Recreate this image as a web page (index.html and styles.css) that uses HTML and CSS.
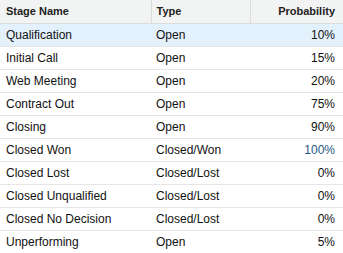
FILE: index.html
```html
<!DOCTYPE html>
<html>
<head>
<meta charset="utf-8">
<link rel="stylesheet" href="styles.css">
</head>
<body>
<table class="grid">
  <colgroup>
    <col class="w1">
    <col class="w2">
    <col class="w3">
  </colgroup>
  <thead>
    <tr>
      <th>Stage Name</th>
      <th>Type</th>
      <th class="num">Probability</th>
    </tr>
  </thead>
  <tbody>
    <tr class="sel"><td>Qualification</td><td>Open</td><td class="num">10%</td></tr>
    <tr><td>Initial Call</td><td>Open</td><td class="num">15%</td></tr>
    <tr><td>Web Meeting</td><td>Open</td><td class="num">20%</td></tr>
    <tr><td>Contract Out</td><td>Open</td><td class="num">75%</td></tr>
    <tr><td>Closing</td><td>Open</td><td class="num">90%</td></tr>
    <tr><td>Closed Won</td><td>Closed/Won</td><td class="num won">100%</td></tr>
    <tr><td>Closed Lost</td><td>Closed/Lost</td><td class="num">0%</td></tr>
    <tr><td>Closed Unqualified</td><td>Closed/Lost</td><td class="num">0%</td></tr>
    <tr><td>Closed No Decision</td><td>Closed/Lost</td><td class="num">0%</td></tr>
    <tr><td>Unperforming</td><td>Open</td><td class="num">5%</td></tr>
  </tbody>
</table>
</body>
</html>
```
FILE: styles.css
```css
html, body {
  margin: 0;
  padding: 0;
  background: #ffffff;
}
.grid {
  border-collapse: collapse;
  width: 343px;
  table-layout: fixed;
  font-family: "Liberation Sans", Arial, sans-serif;
  color: #111;
}
.grid .w1 { width: 151px; }
.grid .w2 { width: 99px; }
.grid .w3 { width: 93px; }
.grid th,
.grid td {
  box-sizing: border-box;
  height: 23px;
  padding: 0 8px 0 5px;
  white-space: nowrap;
  text-align: left;
}
.grid th {
  background: #f2f3f3;
  font-size: 11px;
  font-weight: bold;
  color: #222;
  border-bottom: 1px solid #dcdcdc;
  border-right: 1px solid #dcdcdc;
}
.grid th:last-child { border-right: none; }
.grid td {
  font-size: 12px;
  border-bottom: 1px solid #e6e6e6;
}
.grid th:first-child,
.grid td:first-child { padding-left: 6px; }
.grid .num { text-align: right; }
.grid tr.sel td { background: #e3f1fd; }
.grid td.won { color: #1f5a85; }
```
